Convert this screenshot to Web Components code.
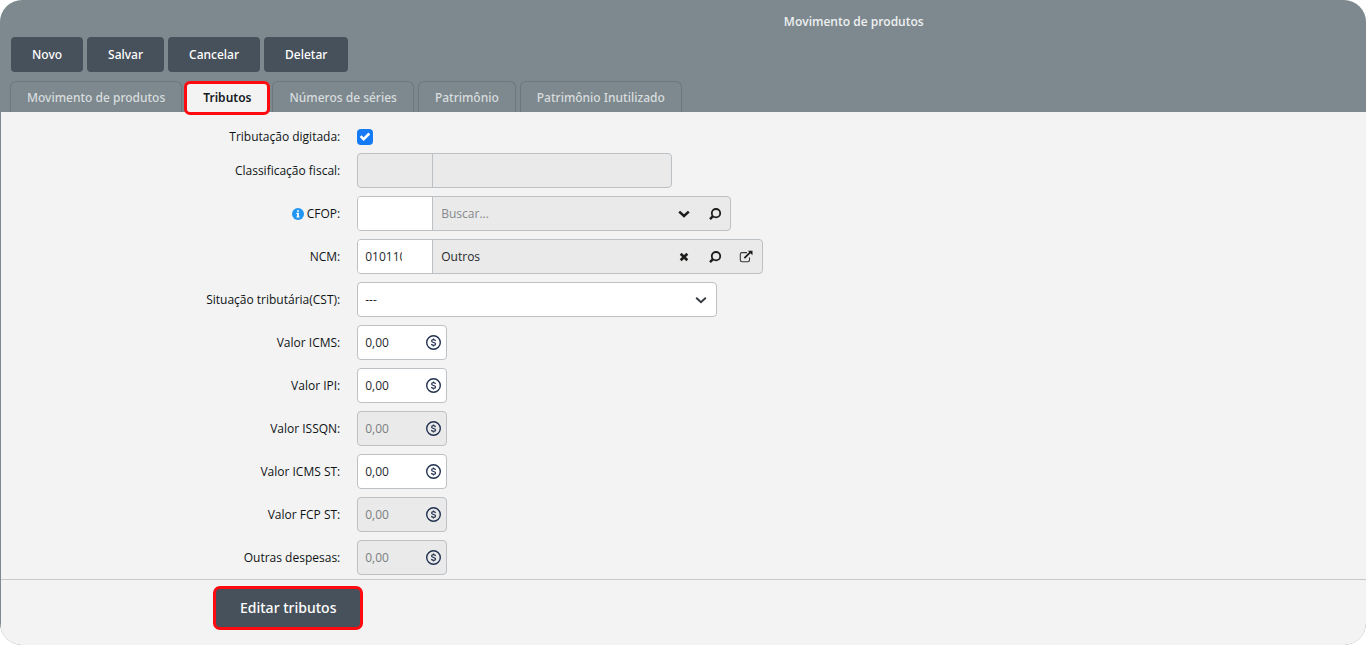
<!DOCTYPE html>
<html lang="pt-BR">
<head>
<meta charset="utf-8">
<meta name="viewport" content="width=device-width, initial-scale=1">
<title>Movimento de produtos</title>
<style>
  body {
    margin: 0;
    background: #fff;
    color: #101315;
    font: 12px/16px "Open Sans", "Noto Sans", sans-serif;
    --header: #7d898e;
    --panel: #f3f3f3;
    --dark: #47515b;
    --line: #bcc1c5;
    --muted: #eaeaea;
    --mark: #ff0a0f;
  }
</style>
</head>
<body>
<app-window heading="Movimento de produtos">
  <action-button slot="actions">Novo</action-button>
  <action-button slot="actions">Salvar</action-button>
  <action-button slot="actions">Cancelar</action-button>
  <action-button slot="actions">Deletar</action-button>

  <tab-bar slot="tabs" role="tablist">
    <tab-item>Movimento de produtos</tab-item>
    <tab-item active>Tributos</tab-item>
    <tab-item>Números de séries</tab-item>
    <tab-item>Patrimônio</tab-item>
    <tab-item>Patrimônio Inutilizado</tab-item>
  </tab-bar>

  <check-field label="Tributação digitada:"></check-field>
  <lookup-field label="Classificação fiscal:" locked size="small"></lookup-field>
  <lookup-field label="CFOP:" hint placeholder="Buscar..." icons="down search" size="medium"></lookup-field>
  <lookup-field label="NCM:" code="010110" text="Outros" icons="clear search open" size="large"></lookup-field>
  <select-field label="Situação tributária(CST):"></select-field>
  <money-field label="Valor ICMS:"></money-field>
  <money-field label="Valor IPI:"></money-field>
  <money-field label="Valor ISSQN:" locked></money-field>
  <money-field label="Valor ICMS ST:"></money-field>
  <money-field label="Valor FCP ST:" locked></money-field>
  <money-field label="Outras despesas:" locked></money-field>

  <action-button slot="footer" large marked>Editar tributos</action-button>
</app-window>

<script>
  class BaseElement extends HTMLElement {
    connectedCallback() {
      if (this.shadowRoot) return;
      this.attachShadow({ mode: 'open' }).innerHTML =
        `<style>* { box-sizing: border-box; } button, input, select { font: inherit; color: inherit; margin: 0; }
         ${this.constructor.css}</style>${this.render()}`;
    }
    attr(name) { return this.getAttribute(name) || ''; }
  }

  /* Frame: heading, actions, tabs, form and footer */
  class AppWindow extends BaseElement {
    static css = `
      :host { display: flex; flex-direction: column; min-height: 100vh; background: var(--header);
              border-radius: 22px; overflow: hidden; box-sizing: border-box; }
      h1 { margin: 14px 0 7px 25%; text-align: center; font: inherit; font-weight: 600; color: #eef0f1; }
      .actions { display: flex; flex-wrap: wrap; gap: 4px; padding: 0 11px 9px; }
      .panel { flex: 1; display: flex; flex-direction: column; margin-left: 1px; background: var(--panel); }
      form { display: grid; gap: 8px; padding: 16px 0 4px; }
      footer { flex: 1; border-top: 1px solid #c9c9c9; padding: 6px 16px 8px 212px; }
    `;
    render() {
      return `<h1>${this.attr('heading')}</h1>
        <div class="actions"><slot name="actions"></slot></div>
        <slot name="tabs"></slot>
        <div class="panel"><form><slot></slot></form>
        <footer><slot name="footer"></slot></footer></div>`;
    }
  }

  class ActionButton extends BaseElement {
    static css = `
      :host { display: inline-flex; font-family: "Noto Sans", "Open Sans", sans-serif; }
      button { height: 35px; padding: 0 21px; border: 0; border-radius: 4px; background: var(--dark);
               color: #fff; font-weight: 500; cursor: pointer; }
      :host([large]) button { height: 44px; padding: 0 24px; font-size: 14px; }
      :host([marked]) button { border: 3px solid var(--mark); border-radius: 7px; }
    `;
    render() { return `<button type="button"><slot></slot></button>`; }
  }

  class TabBar extends BaseElement {
    static css = `:host { display: flex; gap: 4px; padding: 0 10px; }`;
    render() { return `<slot></slot>`; }
  }

  class TabItem extends BaseElement {
    static css = `
      :host { display: block; position: relative; font-family: "Noto Sans", "Open Sans", sans-serif; }
      button { height: 31px; padding: 2px 16px 0; border: 1px solid #6b787f; border-bottom: 0;
               border-radius: 6px 6px 0 0; background: none; color: #d9dddf; font-weight: 500; white-space: nowrap; }
      :host([active]) button { background: var(--panel); border-color: var(--panel); color: #15191c; font-weight: 600; }
      :host([active])::after { content: ""; position: absolute; inset: 0 -2px -3px; pointer-events: none;
               border: 3px solid var(--mark); border-radius: 6px; }
    `;
    render() {
      return `<button type="button" role="tab" aria-selected="${this.hasAttribute('active')}"><slot></slot></button>`;
    }
  }

  /* Shared two-column row: label at the left, control at the right */
  class FieldElement extends BaseElement {
    static row = `
      :host { display: grid; grid-template-columns: 25% 1fr; align-items: center; }
      label { display: flex; justify-content: flex-end; align-items: center; gap: 3px; padding-right: 2px; text-align: right; }
      .control { display: flex; align-items: center; margin-left: 15px; position: relative;
                 height: 35px; background: #fff; border: 1px solid var(--line); border-radius: 4px; overflow: hidden; }
      input, select { height: 100%; min-width: 0; border: 0; border-radius: 0; outline: 0; background: none;
                      color: #26292c; padding: 0 8px 0 7px; }
      svg { display: block; flex: none; }
    `;
    render() {
      const hint = this.hasAttribute('hint')
        ? `<svg width="12" height="12" viewBox="0 0 12 12" aria-hidden="true"><circle cx="6" cy="6" r="6" fill="#2196f3"/><path fill="#fff" d="M5.1 2.2h1.8v1.6H5.1zM4.4 4.8h2.5v3.6h.7v1.2H4.4V8.4h.7V6h-.7z"/></svg>` : '';
      return `<label for="control">${hint}${this.attr('label')}</label>${this.control()}`;
    }
  }

  class CheckField extends FieldElement {
    static css = FieldElement.row + `
      .box { display: grid; width: 16px; height: 17px; margin-left: 15px; align-items: end; }
      .box > * { grid-area: 1 / 1; }
      input { appearance: none; width: 16px; height: 16px; padding: 0; border-radius: 4px; background: #d0d0d0; }
      input:checked { background: #147bf5; }
      svg { pointer-events: none; }
    `;
    control() {
      return `<span class="box"><input id="control" type="checkbox" checked>
        <svg width="16" height="16" viewBox="0 0 16 16"><path d="M3.600 7.200l3 3L12.300 4.500" fill="none" stroke="#fff" stroke-width="2.500"/></svg></span>`;
    }
  }

  const ICONS = {
    down: ['Abrir lista', `<path d="M2.200 4.600L7 9l4.800-4.400" fill="none" stroke="#1d1d1b" stroke-width="2.500"/>`],
    search: ['Pesquisar', `<circle cx="8" cy="6.200" r="4.200" fill="none" stroke="#1d1d1b" stroke-width="1.800"/><path d="M5 9.200L2 12.200" stroke="#1d1d1b" stroke-width="2.400" fill="none"/>`],
    clear: ['Limpar', `<path d="M3.700 3.700l6.600 6.600M10.300 3.700l-6.600 6.600" stroke="#1d1d1b" stroke-width="2.700" fill="none"/>`],
    open: ['Abrir cadastro', `<path d="M8 2.600H3a1.700 1.700 0 0 0-1.700 1.700v5.700a1.700 1.700 0 0 0 1.700 1.700h5.800a1.700 1.700 0 0 0 1.700-1.700V7.500" fill="none" stroke="#35383a" stroke-width="1.100"/><path d="M5.400 8.100l5.800-5.800" stroke="#1d1d1b" stroke-width="1.800"/><path d="M8.900.7h4.600v4.600z" fill="#1d1d1b"/>`]
  };

  class LookupField extends FieldElement {
    static css = FieldElement.row + `
      .control { background: var(--muted); width: 315px; }
      :host([size=medium]) .control { width: 374px; }
      :host([size=large]) .control { width: 406px; }
      .code { width: 75px; flex: none; padding-right: 30px; background: #fff; border-right: 1px solid var(--line); }
      :host([locked]) .code { background: none; }
      .text { width: 235px; padding-left: 8px; }
      .text::placeholder { color: #86898b; opacity: 1; }
      button { display: grid; place-items: center; width: 31px; height: 100%; flex: none; padding: 0; border: 0; background: none; }
    `;
    control() {
      const off = this.hasAttribute('locked') ? 'disabled' : '';
      const icons = this.attr('icons').split(' ').filter(Boolean).map(n =>
        `<button type="button" aria-label="${ICONS[n][0]}"><svg width="14" height="14" viewBox="0 0 14 14">${ICONS[n][1]}</svg></button>`).join('');
      return `<div class="control"><input id="control" class="code" value="${this.attr('code')}" ${off}>
        <input class="text" aria-label="Descrição" value="${this.attr('text')}" placeholder="${this.attr('placeholder')}" ${off}>${icons}</div>`;
    }
  }

  class SelectField extends FieldElement {
    static css = FieldElement.row + `
      .control { width: 360px; }
      select { appearance: none; width: 100%; }
      svg { position: absolute; right: 8px; pointer-events: none; }
    `;
    control() {
      return `<div class="control"><select id="control"><option>---</option></select>
        <svg width="14" height="14" viewBox="0 0 14 14"><path d="M2.200 4.800L7 9.300l4.800-4.500" fill="none" stroke="#343a40" stroke-width="1.900"/></svg></div>`;
    }
  }

  class MoneyField extends FieldElement {
    static css = FieldElement.row + `
      .control { width: 90px; padding-right: 4px; }
      input { flex: 1; width: 0; }
      :host([locked]) .control { background: var(--muted); }
      :host([locked]) input { color: #7b7e80; }
    `;
    control() {
      const off = this.hasAttribute('locked') ? 'disabled' : '';
      return `<div class="control"><input id="control" value="0,00" ${off}>
        <svg width="16" height="16" viewBox="0 0 16 16" fill="none" stroke="#213150"><circle cx="7.500" cy="7.500" r="6.800" stroke-width="1.400"/><path d="M9.500 6C9.300 5.100 8.600 4.700 7.500 4.700c-1.100 0-1.900.5-1.900 1.300 0 2 4 1 4 3 0 .8-.8 1.300-2.100 1.300-1.100 0-1.900-.4-2.100-1.300M7.500 3.400v1.300M7.500 10.300v1.300" stroke-width="1.200"/></svg></div>`;
    }
  }

  customElements.define('app-window', AppWindow);
  customElements.define('action-button', ActionButton);
  customElements.define('tab-bar', TabBar);
  customElements.define('tab-item', TabItem);
  customElements.define('check-field', CheckField);
  customElements.define('lookup-field', LookupField);
  customElements.define('select-field', SelectField);
  customElements.define('money-field', MoneyField);
</script>
</body>
</html>
